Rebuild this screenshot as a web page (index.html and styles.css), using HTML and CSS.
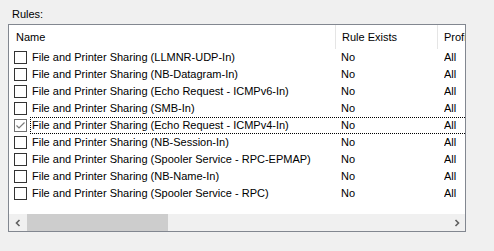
FILE: index.html
```html
<!DOCTYPE html>
<html lang="en">

<head>
    <meta charset="UTF-8" />
    <title>Rules</title>
    <link rel="stylesheet" href="styles.css">
</head>

<body>
    <div class="group-label">Rules:</div>

    <div class="listview">
        <div class="header">
            <div class="col col-name">Name</div>
            <div class="col col-exists">Rule Exists</div>
            <div class="col col-profile">Profile</div>
        </div>

        <div class="rows">
            <div class="row">
                <span class="check"></span>
                <div class="item">
                    <span class="cell col-name">File and Printer Sharing (LLMNR-UDP-In)</span>
                    <span class="cell col-exists">No</span>
                    <span class="cell col-profile">All</span>
                </div>
            </div>
            <div class="row">
                <span class="check"></span>
                <div class="item">
                    <span class="cell col-name">File and Printer Sharing (NB-Datagram-In)</span>
                    <span class="cell col-exists">No</span>
                    <span class="cell col-profile">All</span>
                </div>
            </div>
            <div class="row">
                <span class="check"></span>
                <div class="item">
                    <span class="cell col-name">File and Printer Sharing (Echo Request - ICMPv6-In)</span>
                    <span class="cell col-exists">No</span>
                    <span class="cell col-profile">All</span>
                </div>
            </div>
            <div class="row">
                <span class="check"></span>
                <div class="item">
                    <span class="cell col-name">File and Printer Sharing (SMB-In)</span>
                    <span class="cell col-exists">No</span>
                    <span class="cell col-profile">All</span>
                </div>
            </div>
            <div class="row">
                <span class="check checked">
                    <svg width="11" height="11" viewBox="0 0 11 11">
                        <path d="M1.5 5.5 L4 8 L9.5 2.5" fill="none" stroke="#7a7a7a" stroke-width="1.2" />
                    </svg>
                </span>
                <div class="item focused">
                    <span class="cell col-name">File and Printer Sharing (Echo Request - ICMPv4-In)</span>
                    <span class="cell col-exists">No</span>
                    <span class="cell col-profile">All</span>
                </div>
            </div>
            <div class="row">
                <span class="check"></span>
                <div class="item">
                    <span class="cell col-name">File and Printer Sharing (NB-Session-In)</span>
                    <span class="cell col-exists">No</span>
                    <span class="cell col-profile">All</span>
                </div>
            </div>
            <div class="row">
                <span class="check"></span>
                <div class="item">
                    <span class="cell col-name">File and Printer Sharing (Spooler Service - RPC-EPMAP)</span>
                    <span class="cell col-exists">No</span>
                    <span class="cell col-profile">All</span>
                </div>
            </div>
            <div class="row">
                <span class="check"></span>
                <div class="item">
                    <span class="cell col-name">File and Printer Sharing (NB-Name-In)</span>
                    <span class="cell col-exists">No</span>
                    <span class="cell col-profile">All</span>
                </div>
            </div>
            <div class="row">
                <span class="check"></span>
                <div class="item">
                    <span class="cell col-name">File and Printer Sharing (Spooler Service - RPC)</span>
                    <span class="cell col-exists">No</span>
                    <span class="cell col-profile">All</span>
                </div>
            </div>
        </div>

        <div class="hscroll">
            <div class="arrow">
                <svg width="8" height="8" viewBox="0 0 8 8">
                    <path d="M5.5 1 L2.5 4 L5.5 7" fill="none" stroke="#606060" stroke-width="1.6" />
                </svg>
            </div>
            <div class="track">
                <div class="thumb"></div>
            </div>
            <div class="arrow">
                <svg width="8" height="8" viewBox="0 0 8 8">
                    <path d="M2.5 1 L5.5 4 L2.5 7" fill="none" stroke="#606060" stroke-width="1.6" />
                </svg>
            </div>
        </div>
    </div>
</body>

</html>
```

FILE: styles.css
```css
body {
    margin: 0;
    background: #f0f0f0;
    font-family: "Liberation Sans", Arial, sans-serif;
    font-size: 11px;
    color: #000;
    height: 251px;
    overflow: hidden;
}

.group-label {
    padding: 8px 0 0 12px;
    line-height: 13px;
    height: 16px;
    color: #000;
}

/* list view box */
.listview {
    margin-left: 8px;
    width: 456px;
    height: 206px;
    border: 1px solid #828790;
    background: #fff;
    display: flex;
    flex-direction: column;
    overflow: hidden;
}

.header {
    display: flex;
    height: 24px;
    flex: none;
}

.header .col {
    flex: none;
    line-height: 24px;
    border-right: 1px solid #e5e5e5;
    white-space: nowrap;
    overflow: hidden;
}

.header .col-name {
    width: 319px;
    padding-left: 7px;
}

.header .col-exists {
    width: 95px;
    padding-left: 6px;
}

.header .col-profile {
    width: 80px;
    padding-left: 6px;
    border-right: none;
}

.rows {
    flex: none;
}

.row {
    display: flex;
    align-items: center;
    height: 17px;
    white-space: nowrap;
}

.check {
    flex: none;
    width: 11px;
    height: 11px;
    margin: 0 3px 0 5px;
    border: 1px solid #333;
    background: #fff;
    display: flex;
}

.check.checked {
    border-color: #707070;
}

.item {
    display: flex;
    height: 15px;
    line-height: 15px;
    border: 1px dotted transparent;
    flex: none;
}

.item.focused {
    border-color: #000;
}

.cell {
    display: block;
    flex: none;
    overflow: hidden;
}

.item .col-name {
    width: 309px;
    padding-left: 1px;
}

.item .col-exists {
    width: 103px;
}

.item .col-profile {
    width: 60px;
}

/* horizontal scroll bar */
.hscroll {
    margin-top: auto;
    display: flex;
    height: 17px;
    background: #f0f0f0;
    flex: none;
}

.arrow {
    width: 17px;
    display: flex;
    align-items: center;
    justify-content: center;
    flex: none;
}

.track {
    flex: 1;
    display: flex;
    align-items: stretch;
}

.thumb {
    width: 141px;
    margin-left: 1px;
    background: #cdcdcd;
}
```
